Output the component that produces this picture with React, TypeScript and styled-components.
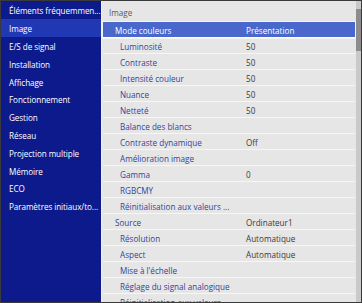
import styled, { createGlobalStyle } from 'styled-components';

const GlobalStyle = createGlobalStyle`
    html, body {
        margin: 0;
        padding: 0;
        background: #ffffff;
    }
    body {
        font-family: 'Open Sans', 'Noto Sans', sans-serif;
    }
`;

const StyledFrame = styled.div`
    width: 362px;
    height: 303px;
    box-sizing: border-box;
    border: 1px solid #3a3a3a;
    display: flex;
    overflow: hidden;
    font-size: 8.15px;
`;

const StyledSidebar = styled.ul`
    width: 100px;
    flex-shrink: 0;
    margin: 0;
    padding: 0;
    list-style: none;
    background: #0d1a8c;
    border-right: 1px solid #f0f0f0;
`;

const StyledSideItem = styled.li<{ $active?: boolean }>`
    height: 17.8px;
    display: flex;
    align-items: center;
    padding: 2px 0 0 8px;
    box-sizing: border-box;
    color: #ffffff;
    white-space: nowrap;
    overflow: hidden;
    letter-spacing: -0.08px;
    background: ${(p) => (p.$active ? '#2138b4' : 'transparent')};
`;

const StyledPanel = styled.div`
    flex: 1;
    display: flex;
    background: #e6e6e6;
    min-width: 0;
`;

const StyledContent = styled.div`
    flex: 1;
    min-width: 0;
    display: flex;
    flex-direction: column;
`;

const StyledHeader = styled.div`
    height: 21px;
    flex-shrink: 0;
    display: flex;
    align-items: center;
    padding: 1px 0 0 7px;
    box-sizing: border-box;
    color: #5a5a5a;
`;

const StyledRow = styled.div<{ $active?: boolean; $indent?: boolean }>`
    height: 16px;
    flex-shrink: 0;
    display: grid;
    grid-template-columns: ${(p) => (p.$indent ? '126px' : '131px')} 1fr;
    align-items: center;
    padding: 1px 0 0 ${(p) => (p.$indent ? '17px' : '12px')};
    box-sizing: border-box;
    margin: 0 1px 0 1px;
    white-space: nowrap;
    border-bottom: 1px solid ${(p) => (p.$active ? '#ffffff' : '#f6f6f6')};
    ${(p) =>
        p.$active
            ? `
        background: #4a68cc;
        outline: 1px solid #f4f4f4;
        color: #ffffff;
    `
            : `
        color: #31459c;
    `}
`;

const StyledLabel = styled.span`
    overflow: hidden;
`;

const StyledValue = styled.span<{ $active?: boolean }>`
    color: ${(p) => (p.$active ? '#ffffff' : '#3a3a3a')};
`;

const StyledScrollbar = styled.div`
    width: 5px;
    flex-shrink: 0;
    background: #c9c9c9;
    padding-top: 8px;
    box-sizing: border-box;
`;

const StyledThumb = styled.div`
    height: 42px;
    background: #8c8c8c;
`;

const sideItems = [
    'Éléments fréquemmen...',
    'Image',
    'E/S de signal',
    'Installation',
    'Affichage',
    'Fonctionnement',
    'Gestion',
    'Réseau',
    'Projection multiple',
    'Mémoire',
    'ECO',
    'Paramètres initiaux/to...',
];

const rows: { label: string; value?: string; indent?: boolean; active?: boolean }[] = [
    { label: 'Mode couleurs', value: 'Présentation', active: true },
    { label: 'Luminosité', value: '50', indent: true },
    { label: 'Contraste', value: '50', indent: true },
    { label: 'Intensité couleur', value: '50', indent: true },
    { label: 'Nuance', value: '50', indent: true },
    { label: 'Netteté', value: '50', indent: true },
    { label: 'Balance des blancs', indent: true },
    { label: 'Contraste dynamique', value: 'Off', indent: true },
    { label: 'Amélioration image', indent: true },
    { label: 'Gamma', value: '0', indent: true },
    { label: 'RGBCMY', indent: true },
    { label: 'Réinitialisation aux valeurs ...', indent: true },
    { label: 'Source', value: 'Ordinateur1' },
    { label: 'Résolution', value: 'Automatique', indent: true },
    { label: 'Aspect', value: 'Automatique', indent: true },
    { label: "Mise à l'échelle", indent: true },
    { label: 'Réglage du signal analogique', indent: true },
    { label: 'Réinitialisation aux valeurs ...', indent: true },
];

const App = () => {
    return (
        <>
            <GlobalStyle />
            <StyledFrame>
                <StyledSidebar>
                    {sideItems.map((item) => (
                        <StyledSideItem key={item} $active={item === 'Image'}>
                            {item}
                        </StyledSideItem>
                    ))}
                </StyledSidebar>
                <StyledPanel>
                    <StyledContent>
                        <StyledHeader>Image</StyledHeader>
                        {rows.map((row, i) => (
                            <StyledRow key={i} $active={row.active} $indent={row.indent}>
                                <StyledLabel>{row.label}</StyledLabel>
                                <StyledValue $active={row.active}>{row.value}</StyledValue>
                            </StyledRow>
                        ))}
                    </StyledContent>
                    <StyledScrollbar>
                        <StyledThumb />
                    </StyledScrollbar>
                </StyledPanel>
            </StyledFrame>
        </>
    );
};

export default App;
